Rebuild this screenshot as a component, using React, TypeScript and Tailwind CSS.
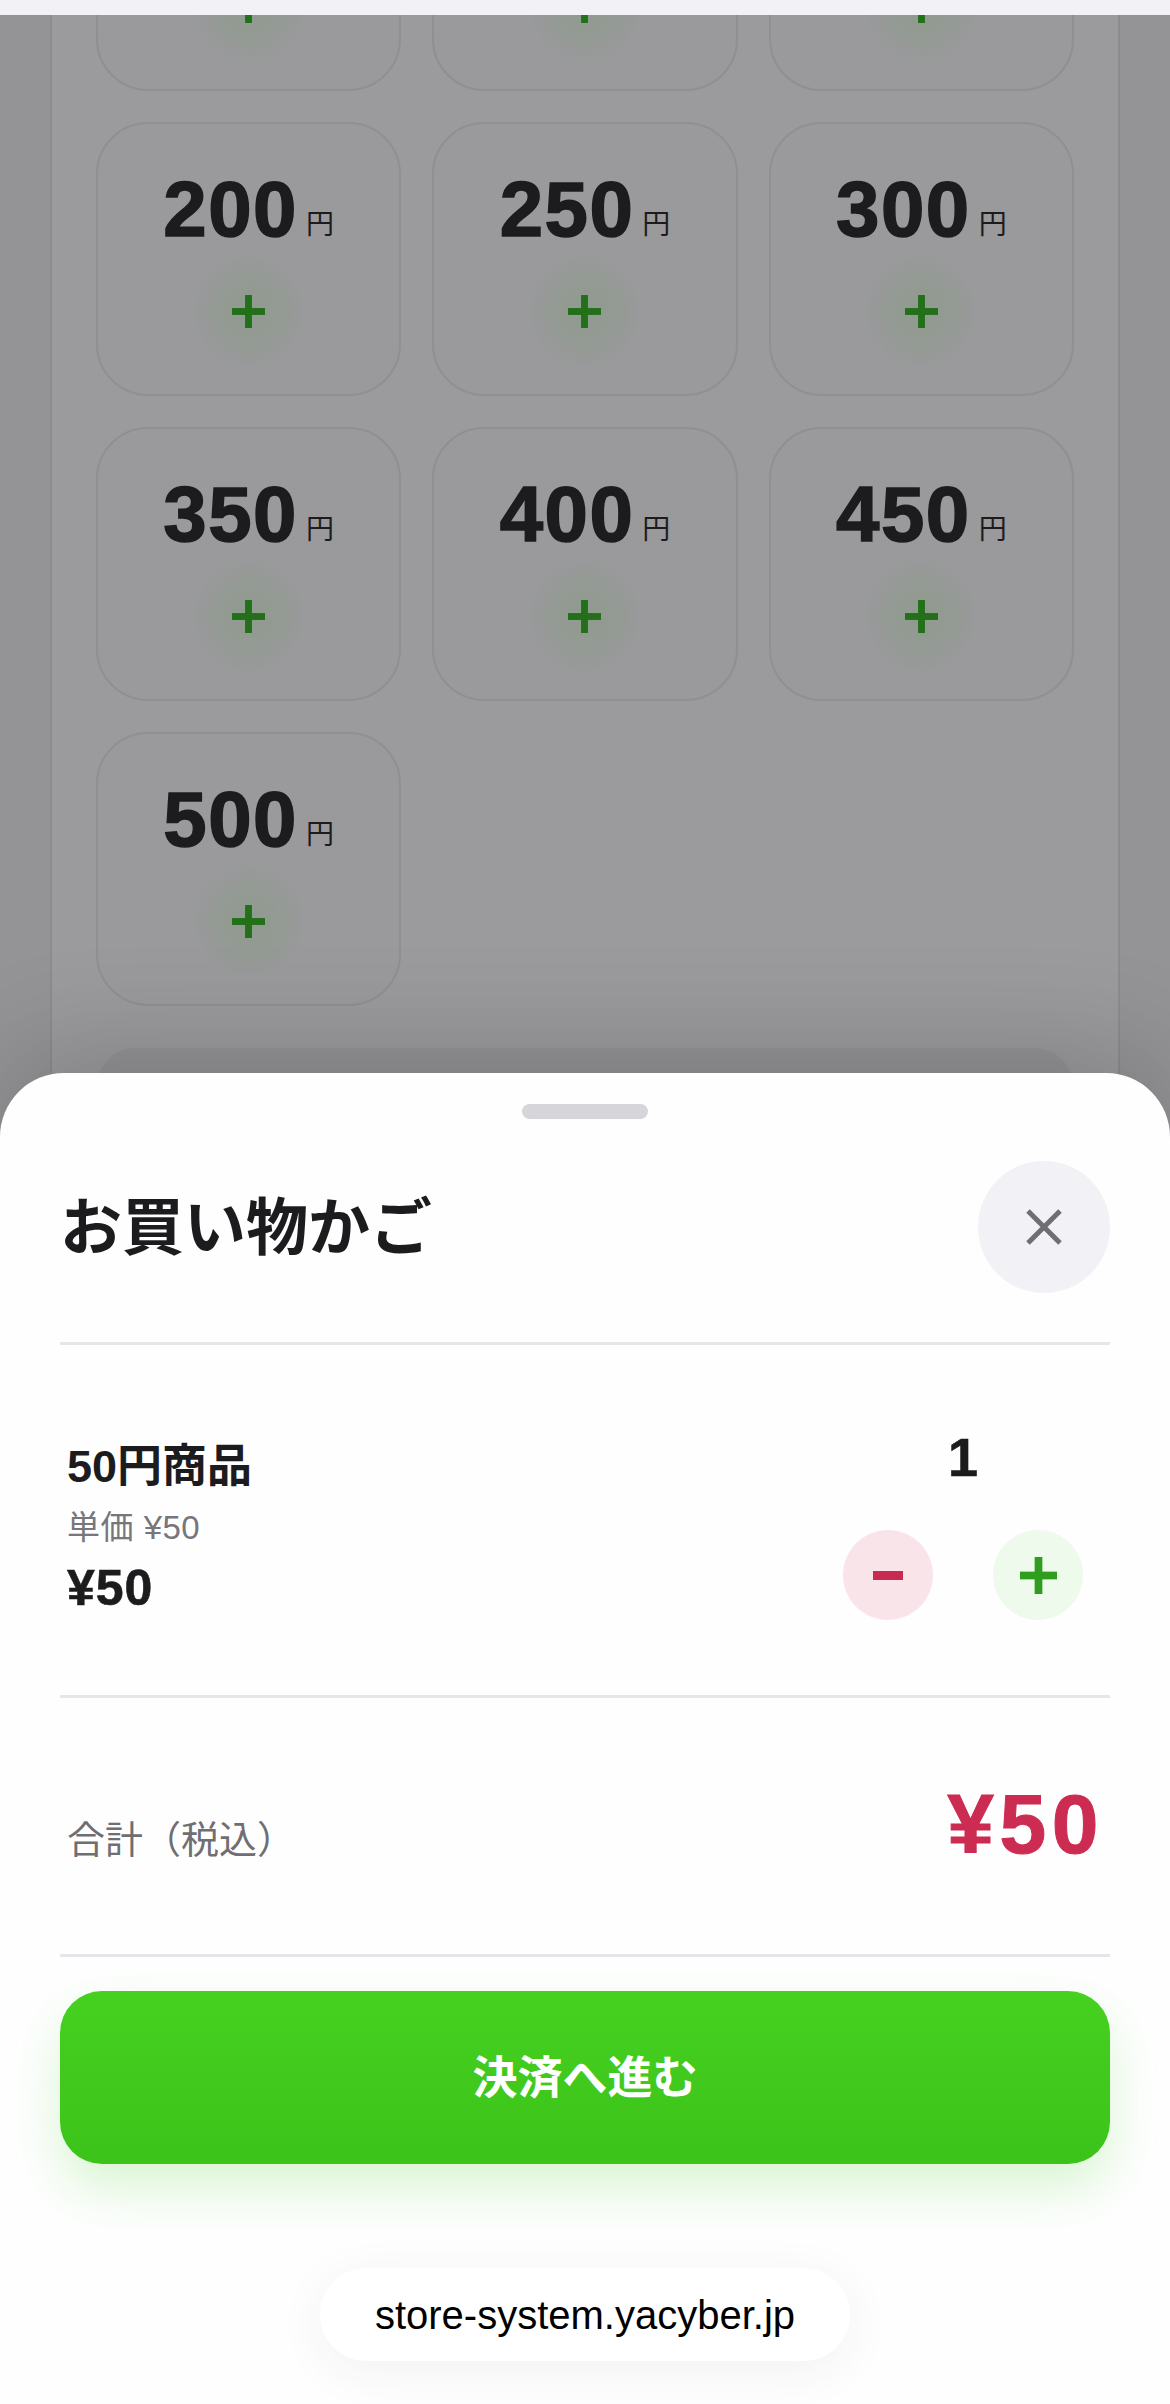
const cjk = "font-['Liberation_Sans','Noto_Sans_CJK_JP',sans-serif]";

const prices: (number | null)[] = [null, null, null, 200, 250, 300, 350, 400, 450, 500];

function PlusMark({ className }: { className: string }) {
  return (
    <svg viewBox="0 0 36 36" className={className} fill="currentColor">
      <rect x="14.25" y="0" width="7.5" height="36" />
      <rect x="0" y="14.25" width="36" height="7.5" />
    </svg>
  );
}

function PriceCard({ value }: { value: number | null }) {
  return (
    <div className="relative flex h-[274px] flex-col items-center rounded-[52px] border-2 border-[#908f92] bg-[#9a999c]">
      <div className="mt-[42px] flex h-[86px] items-baseline justify-center text-[#1c1c1e]">
        {value !== null && (
          <>
            <span className="text-[78px] leading-[86px] font-bold tracking-[1.5px] [-webkit-text-stroke:1.5px_currentColor]">{value}</span>
            <span className="relative -top-[2px] ml-[8px] text-[28px] leading-none font-normal">円</span>
          </>
        )}
      </div>
      <div className="mt-[4px] flex h-[110px] w-[110px] items-center justify-center rounded-full bg-[radial-gradient(circle,rgba(70,170,50,0.14),rgba(70,170,50,0.04)_60%,transparent_72%)]">
        <PlusMark className="h-[33px] w-[33px] text-[#24701a]" />
      </div>
    </div>
  );
}

export default function App() {
  return (
    <div className={`relative h-[2404px] w-full overflow-hidden bg-[#949396] ${cjk}`}>
      <div className="relative z-10 h-[15px] bg-[#f2f2f6]" />

      <div className="mx-[50px] h-[2389px] overflow-hidden border-x-2 border-[#8c8b8e] bg-[#9b9a9d] px-[44px]">
        <div className="-mt-[198px] grid grid-cols-3 gap-x-[31px] gap-y-[31px]">
          {prices.map((p, i) => (
            <PriceCard key={i} value={p} />
          ))}
        </div>
        <div className="mt-[42px] h-[300px] rounded-[40px] bg-[#949396]" />
      </div>

      <div className="absolute inset-x-0 top-[1073px] bottom-0 z-20 flex flex-col rounded-t-[64px] bg-[#fefefe] px-[60px] shadow-[0_-20px_110px_rgba(0,0,0,0.18)]">
        <div className="mt-[31px] h-[15px] w-[126px] self-center rounded-full bg-[#d6d6da]" />

        <div className="mt-[42px] flex items-center justify-between border-b-[3px] border-[#e5e5ea] pb-[49px]">
          <h2 className="relative top-[2px] text-[62px] leading-[70px] font-bold text-[#1c1c1e]">お買い物かご</h2>
          <button className="flex h-[132px] w-[132px] items-center justify-center rounded-full bg-[#f2f2f6]">
            <svg viewBox="0 0 36 36" className="h-[36px] w-[36px] text-[#6e6e73]" fill="none" stroke="currentColor" strokeWidth="5">
              <path d="M2 2 L34 34 M34 2 L2 34" />
            </svg>
          </button>
        </div>

        <div className="flex h-[353px] justify-between border-b-[3px] border-[#e5e5ea] pl-[7px] pr-[27px]">
          <div className="pt-[91px]">
            <div className="text-[45px] leading-[61px] font-bold text-[#1c1c1e]">50円商品</div>
            <div className="text-[33px] leading-[61px] tracking-[0.5px] text-[#76767b]">単価 ¥50</div>
            <div className="text-[50px] leading-[61px] font-bold tracking-[1px] text-[#1c1c1e] [-webkit-text-stroke:0.6px_currentColor]">¥50</div>
          </div>
          <div className="flex flex-col items-center pt-[82px]">
            <div className="h-[60px] text-[54px] leading-[60px] font-bold text-[#1c1c1e] [-webkit-text-stroke:0.6px_currentColor]">1</div>
            <div className="mt-[43px] flex gap-[60px]">
              <button className="flex h-[90px] w-[90px] items-center justify-center rounded-full bg-[#f9e4ea]">
                <span className="h-[9px] w-[30px] bg-[#c92a51]" />
              </button>
              <button className="flex h-[90px] w-[90px] items-center justify-center rounded-full bg-[#eefaeb]">
                <PlusMark className="h-[37px] w-[37px] text-[#2f9e1f]" />
              </button>
            </div>
          </div>
        </div>

        <div className="flex h-[259px] items-baseline justify-between border-b-[3px] border-[#e5e5ea] pl-[7px] pr-[6px] pt-[82px]">
          <span className="text-[38px] leading-[60px] text-[#6e6e73]">合計（税込）</span>
          <span className="text-[84px] leading-[88px] font-bold tracking-[5.5px] text-[#cc2b52] [-webkit-text-stroke:1px_currentColor]">¥50</span>
        </div>

        <button className="mt-[34px] flex h-[173px] items-center justify-center rounded-[42px] bg-gradient-to-b from-[#46d120] to-[#3cc31a] pt-[2px] text-[45px] font-bold text-white shadow-[0_24px_50px_rgba(70,210,40,0.2)]">
          決済へ進む
        </button>

        <div className="mt-[104px] flex h-[93px] w-[530px] items-center justify-center self-center rounded-[46px] bg-white text-[40px] text-black shadow-[0_10px_50px_rgba(60,50,90,0.06)]">
          store-system.yacyber.jp
        </div>
      </div>
    </div>
  );
}
